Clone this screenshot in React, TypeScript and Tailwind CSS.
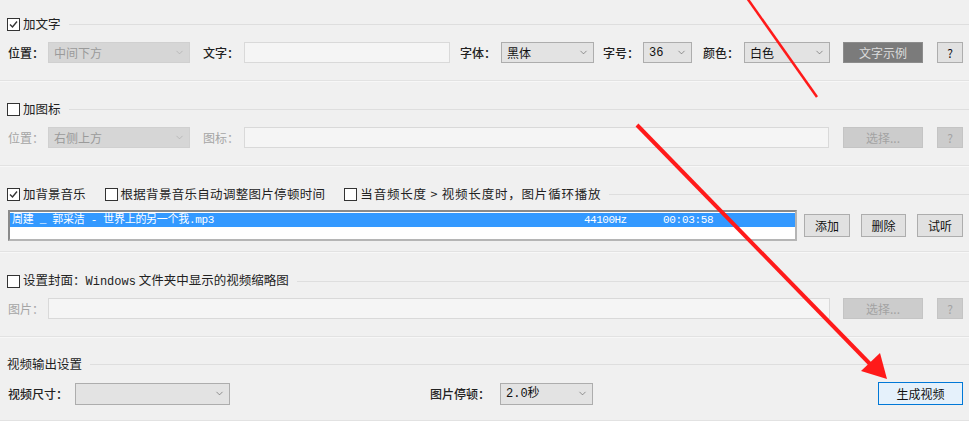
import React from 'react';
import { ChevronDown } from 'lucide-react';

const FONT = "font-['Noto_Sans_CJK_SC','Noto_Sans',sans-serif]";

const CheckBox: React.FC<{ checked?: boolean }> = ({ checked }) => (
  <span className="w-[13px] h-[13px] border border-[#333] bg-white flex items-center justify-center shrink-0">
    {checked && (
      <svg width="11" height="11" viewBox="0 0 11 11">
        <path d="M2 5.5 L4.5 8 L9 2.5" fill="none" stroke="#333" strokeWidth="1.4" />
      </svg>
    )}
  </span>
);

const Title: React.FC<{ children: React.ReactNode }> = ({ children }) => (
  <div className="flex items-center h-4 pl-[7px]">
    {children}
    <div className="flex-1 h-px bg-[#dedede] ml-2" />
  </div>
);

const Check: React.FC<{ checked?: boolean; label: React.ReactNode; className?: string; tracking?: string }> = ({
  checked,
  label,
  className,
  tracking = '',
}) => (
  <div className={`flex items-center gap-[3px] ${className ?? ''}`}>
    <CheckBox checked={checked} />
    <span className={`text-[12.5px] text-[#222] leading-4 whitespace-pre ${tracking}`}>{label}</span>
  </div>
);

const Select: React.FC<{ value?: string; w: string; disabled?: boolean; h?: string; mono?: boolean }> = ({ value, w, disabled, h = 'h-[21px]', mono }) => (
  <div
    className={`${w} ${h} flex items-center justify-between pl-[5px] pr-[4px] border ${
      disabled ? 'bg-[#d6d6d6] border-[#d0d0d0] text-[#9a9a9a]' : 'bg-[#e3e3e3] border-[#adadad] text-[#111]'
    }`}
  >
    <span className={`text-[12px] leading-none ${mono ? "font-['Liberation_Mono','Noto_Sans_CJK_SC',monospace]" : ''}`}>{value}</span>
    <ChevronDown size={11} strokeWidth={1.3} className={disabled ? 'text-[#a8a8a8]' : 'text-[#555]'} />
  </div>
);

const Label: React.FC<{ text: string; w: string; ml?: string; disabled?: boolean }> = ({ text, w, ml = '', disabled }) => (
  <span className={`${w} ${ml} text-[12px] leading-none ${disabled ? 'text-[#a5a5a5]' : 'text-[#222] font-medium'}`}>{text}</span>
);

const Input: React.FC<{ w: string }> = ({ w }) => (
  <div className={`${w} h-[21px] bg-[#f5f5f5] border border-[#d9d9d9]`} />
);

const Btn: React.FC<{ text: string; w: string; ml: string; variant?: 'normal' | 'dark' | 'disabled' | 'primary'; h?: string }> = ({
  text,
  w,
  ml,
  variant = 'normal',
  h = 'h-[23px]',
}) => {
  const styles = {
    normal: 'bg-[#e1e1e1] border-[#adadad] text-[#111]',
    dark: 'bg-[#7b7b7b] border-[#8c8c8c] text-[#dcdcdc]',
    disabled: 'bg-[#cccccc] border-[#c4c4c4] text-[#a3a3a3]',
    primary: 'bg-[#e5f1fb] border-[#0078d7] text-[#111]',
  }[variant];
  return (
    <div className={`${w} ${ml} ${h} border flex items-center justify-center text-[12px] leading-none ${styles}`}>{text}</div>
  );
};

const Separator = () => <div className="h-[2px] bg-[#e2e2e2] border-b border-[#f7f7f7]" />;

export default function App() {
  return (
    <div className={`relative w-[969px] h-[421px] bg-[#f0f0f0] overflow-hidden ${FONT}`}>
      {/* 加文字 */}
      <div className="pt-4 pb-[17px]">
        <Title>
          <Check checked label="加文字" />
        </Title>
        <div className="flex items-center mt-[10px] pl-2">
          <Label text="位置：" w="w-[40px]" />
          <Select value="中间下方" w="w-[142px]" disabled />
          <Label text="文字：" w="w-[41px]" ml="ml-[13px]" />
          <Input w="w-[206px]" />
          <Label text="字体：" w="w-[41px]" ml="ml-[10px]" />
          <Select value="黑体" w="w-[93px]" />
          <Label text="字号：" w="w-[40px]" ml="ml-[9px]" />
          <Select value="36" w="w-[49px]" mono />
          <Label text="颜色：" w="w-[41px]" ml="ml-[11px]" />
          <Select value="白色" w="w-[86px]" />
          <Btn text="文字示例" w="w-[80px]" ml="ml-[13px]" variant="dark" h="h-[21px]" />
          <Btn text="?" w="w-[26px]" ml="ml-[14px]" h="h-[21px]" />
        </div>
      </div>
      <Separator />

      {/* 加图标 */}
      <div className="pt-[19px] pb-[17px]">
        <Title>
          <Check label="加图标" />
        </Title>
        <div className="flex items-center mt-[10px] pl-2">
          <Label text="位置：" w="w-[40px]" disabled />
          <Select value="右侧上方" w="w-[142px]" disabled />
          <Label text="图标：" w="w-[41px]" ml="ml-[13px]" disabled />
          <Input w="w-[585px]" />
          <Btn text="选择..." w="w-[80px]" ml="ml-[14px]" variant="disabled" h="h-[21px]" />
          <Btn text="?" w="w-[26px]" ml="ml-[14px]" variant="disabled" h="h-[21px]" />
        </div>
      </div>
      <Separator />

      {/* 背景音乐 */}
      <div className="pt-[19px] pb-[10px]">
        <Title>
          <Check checked label="加背景音乐" />
          <Check label="根据背景音乐自动调整图片停顿时间" className="ml-[19px]" tracking="tracking-[0.3px]" />
          <Check label="当音频长度 > 视频长度时，图片循环播放" className="ml-[19px]" tracking="tracking-[0.8px]" />
        </Title>
        <div className="flex items-center mt-2 pl-2">
          <div className="w-[789px] h-[31px] bg-white border-2 border-[#8a8a8a] border-r-[#b5b5b5] border-b-[#b5b5b5] pt-px">
            <div className="h-[14px] bg-[#3399ff] flex items-center text-white text-[11px] leading-none font-['Liberation_Mono','Noto_Sans_CJK_SC',monospace]">
              <span className="w-[574px] pl-[2px] tracking-[-0.3px]">周建 _ 郭采洁 - 世界上的另一个我.mp3</span>
              <span className="w-[79px] tracking-[-0.5px]">44100Hz</span>
              <span className="tracking-[-0.3px]">00:03:58</span>
            </div>
          </div>
          <Btn text="添加" w="w-[46px]" ml="ml-[7px]" />
          <Btn text="删除" w="w-[45px]" ml="ml-[11px]" />
          <Btn text="试听" w="w-[46px]" ml="ml-[11px]" />
        </div>
      </div>
      <Separator />

      {/* 设置封面 */}
      <div className="pt-[20px] pb-[17px]">
        <Title>
          <Check
            label={
              <>
                设置封面：
                <span className="font-['Liberation_Mono',monospace] text-[12px]">Windows</span> 文件夹中显示的视频缩略图
              </>
            }
          />
        </Title>
        <div className="flex items-center mt-[9px] pl-2">
          <Label text="图片：" w="w-[40px]" disabled />
          <Input w="w-[782px]" />
          <Btn text="选择..." w="w-[80px]" ml="ml-[13px]" variant="disabled" h="h-[21px]" />
          <Btn text="?" w="w-[26px]" ml="ml-[14px]" variant="disabled" h="h-[21px]" />
        </div>
      </div>
      <Separator />

      {/* 视频输出设置 */}
      <div className="pt-[18px] pb-[15px]">
        <div className="flex items-center h-4 pl-[7px]">
          <span className="text-[12.5px] text-[#222] leading-4">视频输出设置</span>
          <div className="flex-1 h-px bg-[#dedede] ml-2" />
        </div>
        <div className="flex items-center mt-[10px] pl-2 pr-[6px]">
          <Label text="视频尺寸：" w="w-[67px]" />
          <Select w="w-[155px]" h="h-[22px]" />
          <Label text="图片停顿：" w="w-[70px]" ml="ml-[200px]" />
          <Select value="2.0秒" w="w-[93px]" h="h-[22px]" mono />
          <div className="flex-1" />
          <Btn text="生成视频" w="w-[85px]" ml="ml-0" variant="primary" />
        </div>
      </div>
      <Separator />

      {/* 红色箭头标注 */}
      <svg className="absolute inset-0 pointer-events-none" width="969" height="421">
        <line x1="747" y1="-2" x2="817" y2="97" stroke="#ff1a1a" strokeWidth="2.5" />
        <line x1="637" y1="125" x2="872" y2="366" stroke="#ff1a1a" strokeWidth="4" />
        <polygon points="887,379 861,371 880,353" fill="#ff1a1a" />
      </svg>
    </div>
  );
}
